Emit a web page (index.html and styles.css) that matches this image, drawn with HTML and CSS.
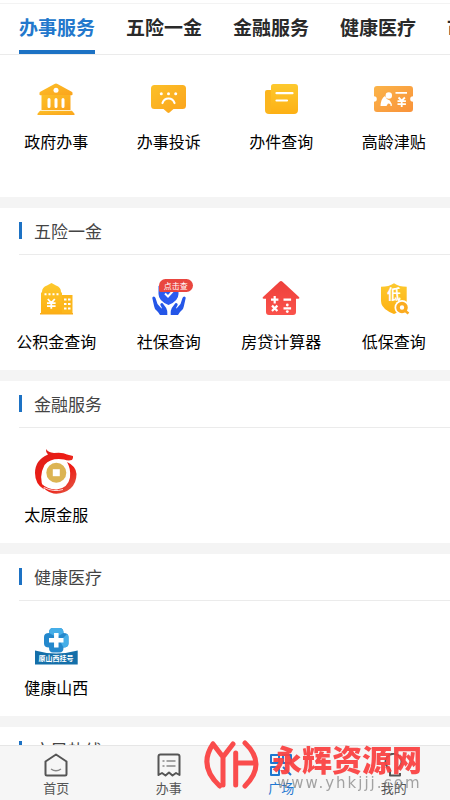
FILE: index.html
```html
<!DOCTYPE html>
<html lang="zh-CN">
<head>
<meta charset="UTF-8" />
<meta name="viewport" content="width=device-width, initial-scale=1.0">
<title>广场</title>
<link rel="stylesheet" href="styles.css">
</head>
<body>
<svg width="0" height="0" class="defs" aria-hidden="true">
  <defs>
    <linearGradient id="gold" x1="0" y1="0" x2="1" y2="1">
      <stop offset="0" stop-color="#fcc028" />
      <stop offset="1" stop-color="#fba31c" />
    </linearGradient>
    <linearGradient id="yellow" x1="0" y1="0" x2="0" y2="1">
      <stop offset="0" stop-color="#fdc92e" />
      <stop offset="1" stop-color="#fdb014" />
    </linearGradient>
    <linearGradient id="orange" x1="0" y1="0" x2="1" y2="1">
      <stop offset="0" stop-color="#fbb449" />
      <stop offset="1" stop-color="#f9923a" />
    </linearGradient>
    <linearGradient id="red" x1="0" y1="0" x2="0" y2="1">
      <stop offset="0" stop-color="#ee403b" />
      <stop offset="1" stop-color="#fa524b" />
    </linearGradient>
    <linearGradient id="dragon" x1="0" y1="0" x2="1" y2="1">
      <stop offset="0" stop-color="#d8201c" />
      <stop offset="0.5" stop-color="#ee1c14" />
      <stop offset="1" stop-color="#e0604c" />
    </linearGradient>
  </defs>
</svg>

<div class="app">
  <nav class="tabs">
    <a href="#service" class="active">办事服务</a>
    <a href="#insurance">五险一金</a>
    <a href="#finance">金融服务</a>
    <a href="#health">健康医疗</a>
    <a href="#hotline">市民热线</a>
  </nav>

  <main>
    <section class="first" id="service">
      <div class="grid">
        <a href="#" class="item">
          <svg class="icon" viewBox="0 0 48 48">
            <g fill="url(#gold)">
              <path d="M7.500 19.500v-1.500q0-.8.8-1.300L22.500 9q1.500-.8 3 0l14.200 7.700q.8.500.8 1.300v1.500q0 .8-.8.8H8.300q-.8 0-.8-.8z" />
              <path d="M9.500 20h29v15h-29z" />
              <path d="M8 35.800h32l2.500 3V40h-37v-1.200z" />
            </g>
            <circle cx="24" cy="15.300" r="2.500" fill="#fff" />
            <path d="M17 24.500v7M24 24.500v7M31 24.500v7" stroke="#fff" stroke-width="3" stroke-linecap="round" />
          </svg>
          <span>政府办事</span>
        </a>
        <a href="#" class="item">
          <svg class="icon" viewBox="0 0 48 48">
            <path d="M9.500 10h28q3.500 0 3.500 3.500v17q0 3.500-3.500 3.500h-9L24.500 37.500q-1 .9-2 0L18.500 34h-9Q6 34 6 30.500v-17Q6 10 9.500 10z" fill="url(#gold)" />
            <g fill="#fff"><circle cx="16.300" cy="18.700" r="1.500" /><circle cx="23.500" cy="18.700" r="1.500" /><circle cx="30.700" cy="18.700" r="1.500" /></g>
            <path d="M17.500 28q1.500-4.500 6-4.500t6 4.500" fill="none" stroke="#fff" stroke-width="2.200" stroke-linecap="round" />
          </svg>
          <span>办事投诉</span>
        </a>
        <a href="#" class="item">
          <svg class="icon" viewBox="0 0 48 48">
            <path d="M10 15h5v24h-3q-4 0-4-4V17q0-2 2-2z" fill="#fbb51e" />
            <path d="M16.500 9H38q3 0 3 3v23q0 4-4 4H11.500q2.500-1 2.500-4V11.500Q14 9 16.500 9z" fill="url(#yellow)" />
            <path d="M19.500 18.200H35.500M19.500 25.500H30" stroke="#fff" stroke-width="2.200" stroke-linecap="round" />
          </svg>
          <span>办件查询</span>
        </a>
        <a href="#" class="item">
          <svg class="icon" viewBox="0 0 48 48">
            <path d="M7 11h33q3 0 3 3v7.200a2.800 2.800 0 0 0 0 5.600V34q0 3-3 3H7q-3 0-3-3v-7.200a2.800 2.800 0 0 0 0-5.600V14q0-3 3-3z" fill="url(#orange)" />
            <circle cx="18.800" cy="20.500" r="3.200" fill="#fff" />
            <path d="M10.500 31q.3-7.500 4.500-10 1 3.200 4.800 4.500l2 3.500v2h-1.200l-.3-2-2.300-.5-1.500 2.500z" fill="#fff" />
            <path d="M25.500 17.800H37M28.500 22.500l3.200 3.200 3.200-3.200M27.500 26.200h8.400M27.500 29.200h8.400M31.700 25.700v6.300" fill="none" stroke="#fff" stroke-width="1.800" />
          </svg>
          <span>高龄津贴</span>
        </a>
      </div>
    </section>

    <section id="insurance">
      <h2>五险一金</h2>
      <div class="grid">
        <a href="#" class="item">
          <svg class="icon" viewBox="0 0 48 48">
            <path d="M10 17q0-5 5-6.500L19.500 8l4.500 2.500q5 1.500 5 6.500l1 1v20H9V18z" fill="url(#yellow)" />
            <path d="M30 20h10.500v18H30z" fill="#fcb71c" />
            <path d="M8 38h33v1.500H8z" fill="#fbad1a" />
            <path d="M12.500 19.300h14.500" stroke="#fff" stroke-width="2" stroke-dasharray="2 2" />
            <path d="M15.800 24l3.500 3.800 3.500-3.800M15 28.200h8.600M15 31.200h8.600M19.300 27.800v6" fill="none" stroke="#fff" stroke-width="1.800" />
            <path d="M32 24.500h7M32 29h7M32 33.500h7" stroke="#fff" stroke-width="1.800" stroke-dasharray="2.500 1.500" />
          </svg>
          <span>公积金查询</span>
        </a>
        <a href="#" class="item">
          <svg class="icon" viewBox="0 0 48 48">
            <path d="M13.500 11q6-1 10-4 4 3 10 4v8q0 7-10 11-10-4-10-11z" fill="#2c5bef" />
            <path d="M20 18.500l3 3 5-5.500" fill="none" stroke="#fff" stroke-width="2" />
            <g fill="#2456e8">
              <path id="hand" d="M7.300 23q0-1.500 1.500-1.500 1.200 0 1.700 1.500l2 6 4 4.500q.8-.3-.5-2.200-1.500-2.300.3-3.100 1.200-.4 2.300 1.300 3.700 4 3.700 7.500v3H15q-1.500-3-4-5-1.300-1-1.800-3.500z" />
              <use href="#hand" transform="matrix(-1 0 0 1 48 0)" />
            </g>
          </svg>
          <em class="badge">点击查</em>
          <span>社保查询</span>
        </a>
        <a href="#" class="item">
          <svg class="icon" viewBox="0 0 48 48">
            <path d="M22.500 6.700q1.500-1.200 3 0L42 22q1 1.500-.7 1.700H39V37q0 3-3 3H12q-3 0-3-3V23.700H6.700Q5 23.500 6 22z" fill="url(#red)" />
            <path d="M14 24.700h7.400M17.700 21v7.400M26.500 24.700h7.600M15 30.600l5.400 5.400M20.400 30.600L15 36M26.500 33.300h7.600" stroke="#fff" stroke-width="2.200" />
            <circle cx="30.300" cy="30" r="1.400" fill="#fff" />
            <circle cx="30.300" cy="36.600" r="1.400" fill="#fff" />
          </svg>
          <span>房贷计算器</span>
        </a>
        <a href="#" class="item">
          <svg class="icon" viewBox="0 0 48 48">
            <path d="M24 8.300q5 3.500 12.700 3.500V26q0 8-12.700 13Q11 34 11 26V11.800q8 0 13-3.500z" fill="url(#yellow)" />
            <text x="24" y="24" class="icon-text">低</text>
            <circle cx="32" cy="32.500" r="7.500" fill="#fff" />
            <circle cx="32" cy="32.500" r="4" fill="none" stroke="#fbab20" stroke-width="3.600" />
            <path d="M34 35l4.500 3.500" stroke="#fbab20" stroke-width="2.500" />
          </svg>
          <span>低保查询</span>
        </a>
      </div>
    </section>

    <section id="finance">
      <h2>金融服务</h2>
      <div class="grid">
        <a href="#" class="item">
          <svg class="icon" viewBox="0 0 48 48">
            <path d="M35 14q9 4 9.500 12 0 9-6 14.500-7 6-17 5-9-2-13.500-11 8 7.500 17 7 11-1.500 13-12 1-9-3-15.500z" fill="url(#dragon)" />
            <path d="M14 1q2 3.500 8 4 9-1 13 1.500l6 1.500q.5 2-1 4-4 1-8-.5Q19 9.500 12.500 17 6 29 12 41.500 3 36 3 25 3 12 16 6.500 13.500 4 14 1z" fill="url(#dragon)" />
            <path d="M10 35.500q11 6.500 21 2.500M12 39.500q10 5 19 2" fill="none" stroke="#fff" stroke-width="1" opacity=".8" />
            <circle cx="24.300" cy="24.700" r="10" fill="#dcb453" />
            <path d="M20.800 21.200h7v7h-7z" fill="#fff" />
          </svg>
          <span>太原金服</span>
        </a>
      </div>
    </section>

    <section id="health">
      <h2>健康医疗</h2>
      <div class="grid">
        <a href="#" class="item">
          <svg class="icon" viewBox="0 0 48 48">
            <path d="M21 7h6.500q4 0 4 5 5 0 5 4v6.500q0 4-5 4 0 5-4 5H21q-4 0-4-5-5 0-5-4V16q0-4 5-4 0-5 4-5z" fill="#2488cc" />
            <path d="M21 7h6.500q4 0 4 5l-7 4-7.500-4q0-5 4-5zM31.500 26.500q5 0 5-4V16q0-2-1.500-3l-7 7z" fill="#45aee8" />
            <path d="M24.300 12v14.500M17 19.300h14.500" stroke="#fff" stroke-width="4.500" />
            <path d="M3 29.500q21 6 42.700 0v14H3z" fill="#146fa9" />
            <text x="24" y="40" class="banner-text">原山西挂号</text>
          </svg>
          <span>健康山西</span>
        </a>
      </div>
    </section>

    <section id="hotline">
      <h2>市民热线</h2>
    </section>
  </main>

  <footer>
    <nav class="bottom-nav">
      <a href="#">
        <svg viewBox="0 0 24 24">
          <path d="M12 1.500L1.500 8.500V21q0 1.500 1.500 1.500h18q1.500 0 1.500-1.500V8.500z" />
          <path d="M7 16q5 3.500 10 0" class="thin" />
        </svg>
        <span>首页</span>
      </a>
      <a href="#">
        <svg viewBox="0 0 24 24">
          <path d="M3.500 1.500h17q2 0 2 2V22l-3.500-2-3.500 2.500L12 19.500l-3.500 3L5 20l-3.500 2V3.500q0-2 2-2z" />
          <path d="M5.500 8H7.500M9.500 8h9M5.500 13H7.500M9.500 13h9" class="thin" />
        </svg>
        <span>办事</span>
      </a>
      <a href="#" class="active">
        <svg viewBox="0 0 24 24">
          <path d="M2 2h8v8H2zM14 2h8v8h-8zM2 14h8v8H2zM14 14l8 8" />
        </svg>
        <span>广场</span>
      </a>
      <a href="#">
        <svg viewBox="0 0 24 24">
          <path d="M8 16a8 8 0 1 1 7 0M8 16v6.500h10V20" />
        </svg>
        <span>我的</span>
      </a>
    </nav>
    <div class="watermark">
      <svg viewBox="0 0 56 50">
        <path d="M9 4Q-6 26 15.700 46M9 4l10 13L29 4M19 17v28M31.700 13v32M31.700 23H51M41 3Q63 24 41 46" />
      </svg>
      <div>
        <strong>永辉资源网</strong>
        <small>www.yhkjjj.com</small>
      </div>
    </div>
  </footer>
</div>
</body>
</html>
```
FILE: styles.css
```css
* {
  box-sizing: border-box;
}

body {
  margin: 0;
  font-family: 'Noto Sans CJK SC', 'Noto Sans', sans-serif;
  background: #fff;
  color: #000;
}

a {
  color: inherit;
  text-decoration: none;
}

.defs {
  position: absolute;
}

.app {
  display: flex;
  flex-direction: column;
  height: 100vh;
}

/* Top tabs */
.tabs {
  display: flex;
  flex-shrink: 0;
  gap: 31px;
  height: 52px;
  margin-top: 3px;
  padding-left: 19px;
  border-top: 1px solid #f3f3f3;
  border-bottom: 1px solid #ebebeb;
  overflow: hidden;
}

.tabs a {
  flex-shrink: 0;
  font-size: 19px;
  font-weight: 700;
  line-height: 46px;
  color: #2a2a2a;
}

.tabs a.active {
  color: #2378cc;
  border-bottom: 4px solid #1d72c4;
}

/* Sections */
main {
  flex: 1;
  min-height: 0;
  overflow-y: auto;
  scrollbar-width: none;
  background: #f4f4f4;
}

section {
  margin-bottom: 11px;
  background: #fff;
}

section.first {
  padding-bottom: 27px;
}

h2 {
  display: flex;
  align-items: center;
  gap: 12px;
  height: 47px;
  margin: 0 0 0 19px;
  padding-bottom: 2px;
  border-bottom: 1px solid #ebebeb;
  font-size: 17px;
  font-weight: 400;
  color: #444;
}

h2::before {
  content: "";
  width: 3px;
  height: 17px;
  background: #1d72c4;
}

.grid {
  display: grid;
  grid-template-columns: repeat(4, 1fr);
}

.item {
  position: relative;
  display: flex;
  flex-direction: column;
  align-items: center;
  gap: 6px;
  padding: 20px 0 17px;
  font-size: 16px;
  line-height: 24px;
}

.icon {
  width: 48px;
  height: 48px;
}

.icon-text,
.banner-text {
  fill: #fff;
  font-size: 14px;
  font-weight: 700;
  text-anchor: middle;
}

.banner-text {
  font-size: 7px;
}

.badge {
  position: absolute;
  top: 24px;
  left: 50%;
  margin-left: -10px;
  padding: 0 5px;
  border-radius: 7px 7px 7px 2px;
  background: #e9463f;
  color: #fff;
  font-size: 8px;
  font-style: normal;
  line-height: 13px;
}

/* Bottom bar */
footer {
  position: relative;
  flex-shrink: 0;
}

.bottom-nav {
  display: grid;
  grid-template-columns: repeat(4, 1fr);
  height: 55px;
  padding-top: 7px;
  border-top: 1px solid #e6e6e6;
  background: #f6f6f6;
}

.bottom-nav a {
  display: flex;
  flex-direction: column;
  align-items: center;
  gap: 2px;
  color: #555;
  font-size: 13px;
  line-height: 18px;
}

.bottom-nav a.active {
  color: #1f77d0;
}

.bottom-nav svg {
  width: 24px;
  height: 24px;
  fill: none;
  stroke: currentColor;
  stroke-width: 2;
  stroke-linejoin: round;
}

.bottom-nav .thin {
  stroke: #888;
  stroke-width: 1.5;
}

.watermark {
  position: absolute;
  right: 28px;
  bottom: 10px;
  display: flex;
  gap: 12px;
  opacity: 0.95;
  pointer-events: none;
}

.watermark svg {
  width: 56px;
  height: 50px;
  fill: none;
  stroke: #fa4343;
  stroke-width: 5;
  stroke-linecap: round;
  stroke-linejoin: round;
}

.watermark div {
  display: flex;
  flex-direction: column;
}

.watermark strong {
  color: #fa4343;
  font-size: 30px;
  font-weight: 900;
  line-height: 36px;
}

.watermark small {
  padding-left: 5px;
  color: rgba(120, 120, 120, 0.7);
  font-family: 'DejaVu Sans', sans-serif;
  font-size: 15px;
  line-height: 14px;
  letter-spacing: 2px;
}
```
